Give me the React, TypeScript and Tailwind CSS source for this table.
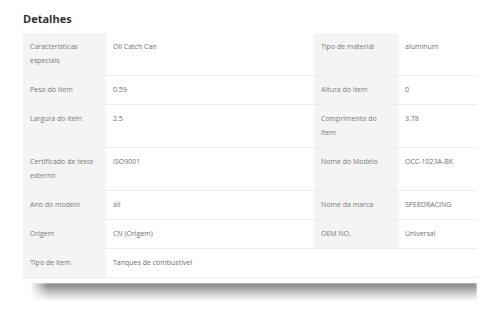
import React from 'react';

interface Row {
  label: string;
  value: string;
  label2?: string;
  value2?: string;
}

const rows: Row[] = [
  { label: 'Características\nespeciais', value: 'Oil Catch Can', label2: 'Tipo de material', value2: 'aluminum' },
  { label: 'Peso do Item', value: '0.59', label2: 'Altura do item', value2: '0' },
  { label: 'Largura do item', value: '2.5', label2: 'Comprimento do\nItem', value2: '3.78' },
  { label: 'Certificado de teste\nexterno', value: 'ISO9001', label2: 'Nome do Modelo', value2: 'OCC-1023A-BK' },
  { label: 'Ano do modelo', value: 'all', label2: 'Nome da marca', value2: 'SPEEDRACING' },
  { label: 'Origem', value: 'CN (Origem)', label2: 'OEM NO.', value2: 'Universal' },
  { label: 'Tipo de item', value: 'Tanques de combustível' },
];

const cell = 'pl-[7px] pr-[6px] pt-[7px] pb-[7px] leading-[14px] whitespace-pre-line border-b border-[#ededed]';

export default function App() {
  return (
    <div className="w-[500px] h-[317px] bg-white pl-[23px] pt-[12px] font-['Open_Sans',sans-serif] overflow-hidden">
      <h2 className="text-[11px] leading-[14px] font-bold text-[#333] mb-[7px]">Detalhes</h2>
      <div className="w-[454px] grid grid-cols-[83px_208px_84px_79px] text-[7px] text-[#707070] border-r border-[#f0f0f0]">
        {rows.map((r, i) => (
          <React.Fragment key={i}>
            <div className={`${cell} bg-[#f4f4f4] text-[#7a7a7a]`}>{r.label}</div>
            {r.label2 ? (
              <>
                <div className={`${cell} bg-white`}>{r.value}</div>
                <div className={`${cell} bg-[#f4f4f4] text-[#7a7a7a]`}>{r.label2}</div>
                <div className={`${cell} bg-white`}>{r.value2}</div>
              </>
            ) : (
              <div className={`${cell} col-span-3 bg-white`}>{r.value}</div>
            )}
          </React.Fragment>
        ))}
      </div>
      <div className="mt-[5px] ml-[7px] w-[447px] h-[18px] bg-gradient-to-b from-[#7c7c7c] via-[#c4c4c4] to-white blur-[1px] [mask-image:linear-gradient(to_right,transparent,black_18px)]" />
    </div>
  );
}
